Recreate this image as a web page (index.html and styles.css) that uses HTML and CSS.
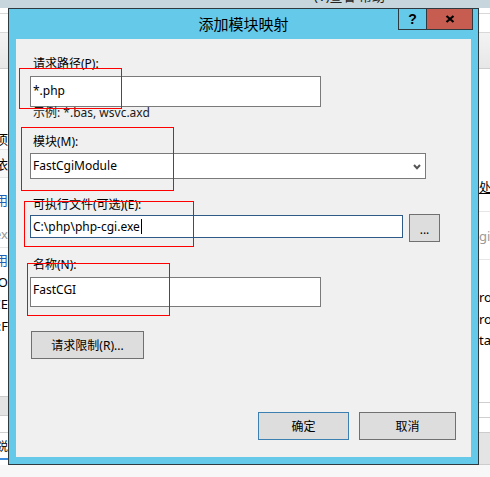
FILE: index.html
```html
<!DOCTYPE html>
<html lang="zh-CN">
<head>
<meta charset="utf-8">
<title>添加模块映射</title>
<link rel="stylesheet" href="styles.css">
</head>
<body>
<div class="desktop">
  <div class="backdrop">
    <div class="appbar"><span class="appbar-text">(V)查看 帮助</span></div>
    <div class="panes">
      <div class="strip strip-left">
        <div class="row h5 line"></div>
        <div class="row h18 line"></div>
        <div class="row h35 toolbar"></div>
        <div class="row h59"></div>
        <div class="row h22 line-soft"><span>选项</span></div>
        <div class="row h28 shade line-soft"><span>依</span></div>
        <div class="row h42 blue"><span>作用</span></div>
        <div class="row h28 grey line-soft"><span>.ex</span></div>
        <div class="row h22 blue"><span>作用</span></div>
        <div class="row h23"><span>O</span></div>
        <div class="row h22"><span>CE</span></div>
        <div class="row h22"><span>:F</span></div>
        <div class="row h59"></div>
        <div class="row h20 band"></div>
        <div class="row h16"></div>
        <div class="row h28 field"><span>鋭</span></div>
      </div>
      <div class="strip-mid"></div>
      <div class="strip strip-right">
        <div class="row h5 line"></div>
        <div class="row h18 line"></div>
        <div class="row h35 toolbar"></div>
        <div class="row h107"></div>
        <div class="row h22 under"><span>处理</span></div>
        <div class="row h14 line-soft"></div>
        <div class="row h48 grey line-soft"><span>gi</span></div>
        <div class="row h26"></div>
        <div class="row h22"><span>ro</span></div>
        <div class="row h21"><span>ro</span></div>
        <div class="row h22"><span>ta</span></div>
        <div class="row h51"></div>
        <div class="row h16 boxed"></div>
        <div class="row h14"></div>
        <div class="row fill band"></div>
      </div>
    </div>
    <div class="floor"></div>
  </div>

  <div class="dialog">
    <div class="titlebar">
      <span class="title-spacer"></span>
      <div class="title">添加模块映射</div>
      <div class="caption-btns">
        <div class="cap-btn help">?</div>
        <div class="cap-btn close">
          <svg width="10" height="8" viewBox="0 0 10 8" aria-hidden="true">
            <path d="M1.5 1 L8.5 7 M8.5 1 L1.5 7" stroke="#000" stroke-width="2.2" fill="none"/>
          </svg>
        </div>
      </div>
    </div>
    <div class="content">
      <div class="label">请求路径(P):</div>
      <div class="textbox tb-path">*.php</div>
      <div class="hint">示例: *.bas, wsvc.axd</div>

      <div class="label lbl-module">模块(M):</div>
      <div class="select">
        <span>FastCgiModule</span>
        <svg class="chev" width="8" height="6" viewBox="0 0 8 6" aria-hidden="true">
          <path d="M1 1 L4 4.2 L7 1" stroke="#555" stroke-width="2" fill="none"/>
        </svg>
      </div>

      <div class="label lbl-exe">可执行文件(可选)(E):</div>
      <div class="exe-row">
        <div class="textbox tb-exe">C:\php\php-cgi.exe<span class="caret"></span></div>
        <div class="btn btn-browse">...</div>
      </div>

      <div class="label lbl-name">名称(N):</div>
      <div class="textbox tb-name">FastCGI</div>

      <div class="btn btn-limits">请求限制(R)...</div>

      <div class="footer">
        <div class="btn btn-ok">确定</div>
        <div class="btn btn-cancel">取消</div>
      </div>

      <div class="mark mark-1"></div>
      <div class="mark mark-2"></div>
      <div class="mark mark-3"></div>
      <div class="mark mark-4"></div>
    </div>
  </div>
</div>
</body>
</html>
```
FILE: styles.css
```css
* { box-sizing: border-box; }

body {
  margin: 0;
  width: 490px;
  height: 477px;
  overflow: hidden;
  font-family: "Noto Sans", "Noto Sans CJK SC", sans-serif;
  font-size: 12px;
  color: #000;
  background: #f7f7f7;
}

.desktop {
  position: relative;
  width: 490px;
  height: 477px;
}

/* ---------- background application ---------- */
.backdrop {
  display: flex;
  flex-direction: column;
  height: 477px;
}

.appbar {
  height: 8px;
  background: #c6d6dc;
  overflow: hidden;
  padding-left: 314px;
}

.appbar-text {
  display: block;
  margin-top: -10px;
  line-height: 13px;
  font-size: 13px;
  color: #222;
  white-space: nowrap;
}

.panes {
  display: grid;
  grid-template-columns: 8px 1fr 11px;
  height: 457px;
}

.strip {
  display: flex;
  flex-direction: column;
  background: #fff;
  overflow: hidden;
  font-size: 13px;
}

.strip-mid { background: #fff; }

.row {
  display: flex;
  align-items: center;
  white-space: nowrap;
  flex-shrink: 0;
}

.strip-left .row { justify-content: flex-end; }
.strip-right .row { justify-content: flex-start; }

.h5 { height: 6px; }
.h14 { height: 14px; }
.h16 { height: 16px; }
.h18 { height: 19px; }
.h20 { height: 20px; }
.h21 { height: 21px; }
.h22 { height: 22px; }
.h23 { height: 23px; }
.h26 { height: 26px; }
.h28 { height: 28px; }
.h35 { height: 36px; }
.h42 { height: 42px; }
.h48 { height: 48px; }
.h51 { height: 51px; }
.h59 { height: 59px; }
.h107 { height: 107px; }
.fill { flex: 1; }

.line { border-bottom: 1px solid #d8d8d8; }
.line-soft { border-bottom: 1px solid #e6e6e6; }
.toolbar {
  background: linear-gradient(#f3f3f3, #e7e7e7);
  border-bottom: 1px solid #cdcdcd;
}
.shade { background: #f8f8f8; }
.blue { color: #1f5fb5; }
.grey { color: #9a9a9a; }
.band {
  background: #e4e4e4;
  border-top: 1px solid #cccccc;
  border-bottom: 1px solid #cccccc;
}
.boxed {
  border-top: 1px solid #cfcfcf;
  border-bottom: 1px solid #cfcfcf;
}
.field {
  border-top: 1px solid #d0d0d0;
  border-bottom: 2px solid #3a8be0;
  font-size: 12px;
}
.under span {
  text-decoration: underline;
  font-size: 12px;
}

.floor {
  flex: 1;
  background: #f7f7f7;
}

/* ---------- dialog window ---------- */
.dialog {
  position: absolute;
  left: 8px;
  top: 8px;
  width: 471px;
  height: 457px;
  border: 1px solid #2e3a3f;
  background: #65c9e9;
  display: flex;
  flex-direction: column;
}

.titlebar {
  height: 30px;
  display: grid;
  grid-template-columns: 1fr auto 1fr;
  align-items: start;
}

.title {
  line-height: 30px;
  font-size: 15px;
  color: #000;
}

.caption-btns {
  justify-self: end;
  display: flex;
  margin-top: -1px;
  margin-right: 5px;
}

.cap-btn {
  height: 22px;
  border: 1px solid #2e3a3f;
  display: flex;
  align-items: center;
  justify-content: center;
}

.help {
  width: 28px;
  border-right: 0;
  background: #65c9e9;
  font-weight: bold;
  font-size: 14px;
  font-family: "Liberation Sans", "Noto Sans", sans-serif;
  padding-bottom: 1px;
}

.close {
  width: 47px;
  background: #c75c51;
}

.content {
  position: relative;
  height: 418px;
  margin: 0 7px;
  background: #f0f0f0;
  padding: 17px 0 0 14px;
}

.label {
  height: 16px;
  line-height: 16px;
  padding-left: 3px;
  white-space: nowrap;
}

.textbox {
  background: #fff;
  border: 1px solid #7a7a7a;
  padding: 0 2px 2px;
  display: flex;
  align-items: center;
  white-space: nowrap;
}

.tb-path {
  margin-top: 4px;
  width: 291px;
  height: 31px;
}

.hint {
  height: 12px;
  line-height: 12px;
  padding-left: 3px;
  color: #1a1a1a;
  white-space: nowrap;
}

.lbl-module { margin-top: 15px; }

.select {
  margin-top: 3px;
  width: 396px;
  height: 26px;
  background: #fff;
  border: 1px solid #7a7a7a;
  padding: 0 4px 1px 2px;
  display: flex;
  align-items: center;
  justify-content: space-between;
}

.chev { margin-top: 2px; }

.lbl-exe { margin-top: 18px; }

.exe-row {
  margin-top: 1px;
  display: flex;
  align-items: flex-start;
  gap: 6px;
}

.tb-exe {
  margin-top: 1px;
  width: 373px;
  height: 23px;
  border-color: #2d5a87;
  padding-bottom: 1px;
}

.caret {
  display: inline-block;
  width: 1px;
  height: 15px;
  background: #000;
  margin-left: 1px;
}

.btn {
  height: 28px;
  background: #dddddd;
  border: 1px solid #707070;
  display: flex;
  align-items: center;
  justify-content: center;
  white-space: nowrap;
}

.btn-browse {
  width: 31px;
  padding-top: 2px;
}

.lbl-name { margin-top: 15px; }

.tb-name {
  margin-top: 4px;
  width: 291px;
  height: 30px;
  padding-bottom: 5px;
}

.btn-limits {
  margin-top: 24px;
  margin-left: 1px;
  width: 113px;
}

.footer {
  margin-top: 53px;
  padding-right: 15px;
  display: flex;
  justify-content: flex-end;
  gap: 10px;
}

.btn-ok {
  width: 91px;
  border-color: #3c7fb1;
}

.btn-cancel { width: 97px; }

/* ---------- red annotation boxes ---------- */
.mark {
  position: absolute;
  border: 1px solid #ff0000;
  pointer-events: none;
}

.mark-1 { left: 3px; top: 29px; width: 103px; height: 41px; }
.mark-2 { left: 5px; top: 88px; width: 153px; height: 64px; }
.mark-3 { left: 8px; top: 162px; width: 170px; height: 46px; }
.mark-4 { left: 11px; top: 224px; width: 143px; height: 53px; }
```
